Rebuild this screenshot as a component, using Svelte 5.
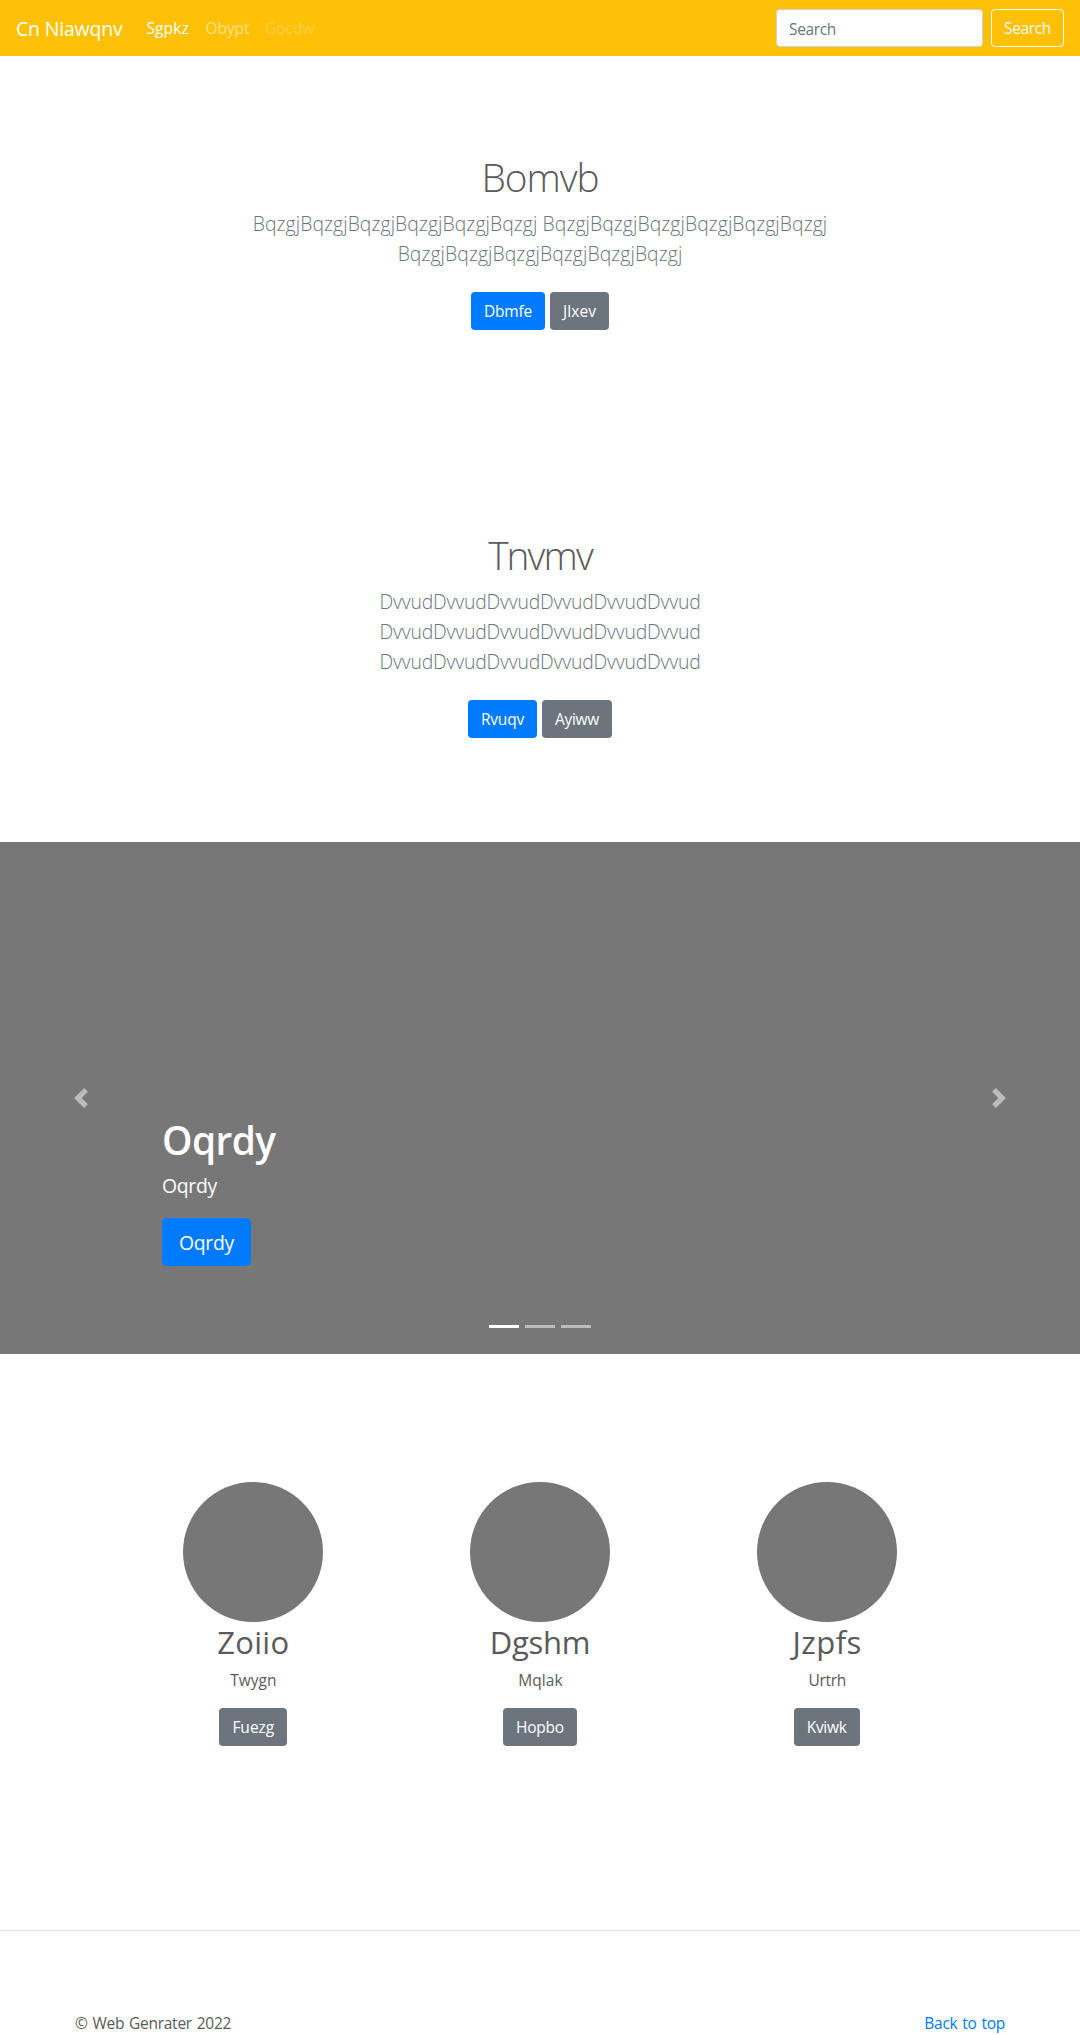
<script>
  const columns = [
    { id: 'zoiio', title: 'Zoiio', text: 'Twygn', action: 'Fuezg' },
    { id: 'dgshm', title: 'Dgshm', text: 'Mqlak', action: 'Hopbo' },
    { id: 'jzpfs', title: 'Jzpfs', text: 'Urtrh', action: 'Kviwk' },
  ];
</script>

<header class="navbar">
  <a class="brand" href="#top">Cn Niawqnv</a>
  <nav>
    <a class="active" href="#top">Sgpkz</a>
    <a class="link" href="#top">Obypt</a>
    <a class="disabled" href="#top">Gocdw</a>
  </nav>
  <form>
    <input type="search" placeholder="Search" aria-label="Search" />
    <button class="outline" type="button">Search</button>
  </form>
</header>

<main>
  <section class="hero first">
    <h1>Bomvb</h1>
    <p class="lead">
      <span>BqzgjBqzgjBqzgjBqzgjBqzgjBqzgj BqzgjBqzgjBqzgjBqzgjBqzgjBqzgj</span>
      <span>BqzgjBqzgjBqzgjBqzgjBqzgjBqzgj</span>
    </p>
    <div class="actions">
      <a class="btn primary dbmfe" href="#top">Dbmfe</a>
      <a class="btn secondary jlxev" href="#top">Jlxev</a>
    </div>
  </section>

  <section class="hero second">
    <h1>Tnvmv</h1>
    <p class="lead">
      <span>DvvudDvvudDvvudDvvudDvvudDvvud</span>
      <span>DvvudDvvudDvvudDvvudDvvudDvvud</span>
      <span>DvvudDvvudDvvudDvvudDvvudDvvud</span>
    </p>
    <div class="actions">
      <a class="btn primary rvuqv" href="#top">Rvuqv</a>
      <a class="btn secondary ayiww" href="#top">Ayiww</a>
    </div>
  </section>

  <section class="carousel">
    <a class="control" href="#top" aria-label="Previous">
      <svg viewBox="0 0 8 8" width="20" height="20" fill="#fff"><path d="M5.25 0l-4 4 4 4 1.5-1.5-2.5-2.5 2.5-2.5-1.5-1.5z" /></svg>
    </a>
    <div class="slide">
      <div class="caption">
        <h1>Oqrdy</h1>
        <p>Oqrdy</p>
        <a class="btn primary large" href="#top">Oqrdy</a>
      </div>
      <div class="indicators"><i class="current"></i><i></i><i></i></div>
    </div>
    <a class="control" href="#top" aria-label="Next">
      <svg viewBox="0 0 8 8" width="20" height="20" fill="#fff"><path d="M2.75 0l-1.5 1.5 2.5 2.5-2.5 2.5 1.5 1.5 4-4-4-4z" /></svg>
    </a>
  </section>

  <section class="marketing">
    {#each columns as col}
      <article class={col.id}>
        <div class="circle"></div>
        <h2>{col.title}</h2>
        <p>{col.text}</p>
        <a class="btn secondary" href="#top">{col.action}</a>
      </article>
    {/each}
  </section>

  <hr />

  <footer>
    <p>© Web Genrater 2022</p>
    <a href="#top">Back to top</a>
  </footer>
</main>

<style>
  :global(body) {
    background: #fff;
    color: #5a5a5a;
    font: 400 15.5px/24px 'Open Sans', 'Noto Sans', sans-serif;
  }
  :global(*) { box-sizing: border-box; }
  h1, h2, p { margin: 0; }
  a { text-decoration: none; }

  .navbar {
    display: flex;
    align-items: center;
    height: 56px;
    padding: 0 16px;
    background: #ffc107;
  }
  .brand {
    width: 107px;
    margin-right: 15.5px;
    padding-top: 2px;
    color: #fff;
    font-size: 19.4px;
    line-height: 30px;
    letter-spacing: -0.14px;
    white-space: nowrap;
  }
  nav { display: flex; }
  nav a { padding: 8px; white-space: nowrap; }
  .active { width: 59px; color: #fff; letter-spacing: 0.1px; }
  .link { width: 59.5px; color: rgba(255, 255, 255, 0.5); letter-spacing: -0.07px; }
  .disabled { color: rgba(255, 255, 255, 0.25); }

  form { display: flex; gap: 8px; margin-left: auto; }
  input {
    width: 207px;
    height: 38px;
    padding: 7px 12px 5px;
    border: 1px solid #ced4da;
    border-radius: 4px;
    background: #fff;
    font: inherit;
    letter-spacing: -0.34px;
  }
  input::placeholder { color: #6c757d; opacity: 1; }
  .outline {
    width: 73px;
    height: 38px;
    padding: 0;
    border: 1px solid #f8f9fa;
    border-radius: 4px;
    background: transparent;
    color: #f8f9fa;
    font: inherit;
    letter-spacing: -0.34px;
  }

  .btn {
    display: inline-block;
    height: 38px;
    padding: 7px 0;
    border-radius: 4px;
    color: #fff;
    text-align: center;
    white-space: nowrap;
  }
  .primary { background: #007bff; }
  .secondary { background: #6c757d; }

  .hero { padding: 96px 0; text-align: center; }
  .first { height: 378px; }
  .second { height: 408px; }
  .hero h1 {
    height: 56px;
    padding-top: 1px;
    font-size: 38.8px;
    font-weight: 300;
    line-height: 48px;
  }
  .first h1 { letter-spacing: -1.05px; }
  .second h1 { letter-spacing: -1.9px; }
  .lead {
    padding-top: 1px;
    color: #6c757d;
    font-size: 19.4px;
    font-weight: 300;
    line-height: 30px;
  }
  .lead span { display: block; white-space: nowrap; }
  .first .lead { letter-spacing: 0.07px; }
  .second .lead { letter-spacing: -0.2px; }
  .actions {
    display: flex;
    justify-content: center;
    gap: 5px;
    margin-top: 23px;
  }
  .dbmfe { width: 74px; letter-spacing: -0.2px; }
  .jlxev { width: 59px; letter-spacing: 0.1px; }
  .rvuqv { width: 69px; letter-spacing: -0.16px; }
  .ayiww { width: 70px; letter-spacing: -0.3px; }

  .carousel {
    display: flex;
    height: 512px;
    background: #777;
  }
  .control {
    display: flex;
    align-items: center;
    justify-content: center;
    width: 15%;
    opacity: 0.5;
  }
  .slide {
    display: flex;
    flex: 1;
    flex-direction: column;
    justify-content: flex-end;
    color: #fff;
  }
  .caption { display: flex; flex-direction: column; align-items: flex-start; }
  .caption h1 {
    height: 56px;
    padding-top: 1px;
    font-size: 38.8px;
    font-weight: 600;
    line-height: 48px;
    letter-spacing: -0.6px;
  }
  .caption p {
    margin-bottom: 17px;
    font-size: 19.4px;
    line-height: 30px;
    letter-spacing: -0.3px;
  }
  .large {
    width: 89px;
    height: 48px;
    padding: 10px 0 8px;
    border-radius: 5px;
    font-size: 19.4px;
    line-height: 30px;
    letter-spacing: -0.3px;
  }
  .indicators {
    display: flex;
    gap: 6px;
    justify-content: center;
    margin: 59px 0 26px;
  }
  .indicators i { width: 30px; height: 3px; background: rgba(255, 255, 255, 0.5); }
  .indicators .current { background: #fff; }

  .marketing {
    display: grid;
    grid-template-columns: repeat(3, 1fr);
    height: 576px;
    padding: 128px 110px 0;
    text-align: center;
  }
  .circle {
    width: 140px;
    height: 140px;
    margin: 0 auto;
    border-radius: 50%;
    background: #777;
  }
  h2 {
    height: 46px;
    padding-top: 1px;
    font-size: 31px;
    font-weight: 400;
    line-height: 38px;
  }
  .marketing p { margin-bottom: 16px; }
  .zoiio h2 { letter-spacing: 0.3px; }
  .dgshm h2 { letter-spacing: -0.3px; }
  .jzpfs h2 { padding-left: 1px; letter-spacing: 0.45px; }
  .dgshm p { padding-left: 1px; letter-spacing: 0.1px; }
  .jzpfs p { padding-left: 1px; letter-spacing: -0.3px; }
  .zoiio .btn { width: 68px; }
  .dgshm .btn { width: 74px; letter-spacing: -0.2px; }
  .jzpfs .btn { width: 66px; letter-spacing: -0.27px; }

  hr { height: 1px; margin: 0; border: 0; background: rgba(0, 0, 0, 0.1); }
  footer {
    display: flex;
    justify-content: space-between;
    height: 104px;
    padding: 80px 75px 0;
    letter-spacing: -0.25px;
    word-spacing: 1px;
  }
  footer a { color: #007bff; }
</style>
